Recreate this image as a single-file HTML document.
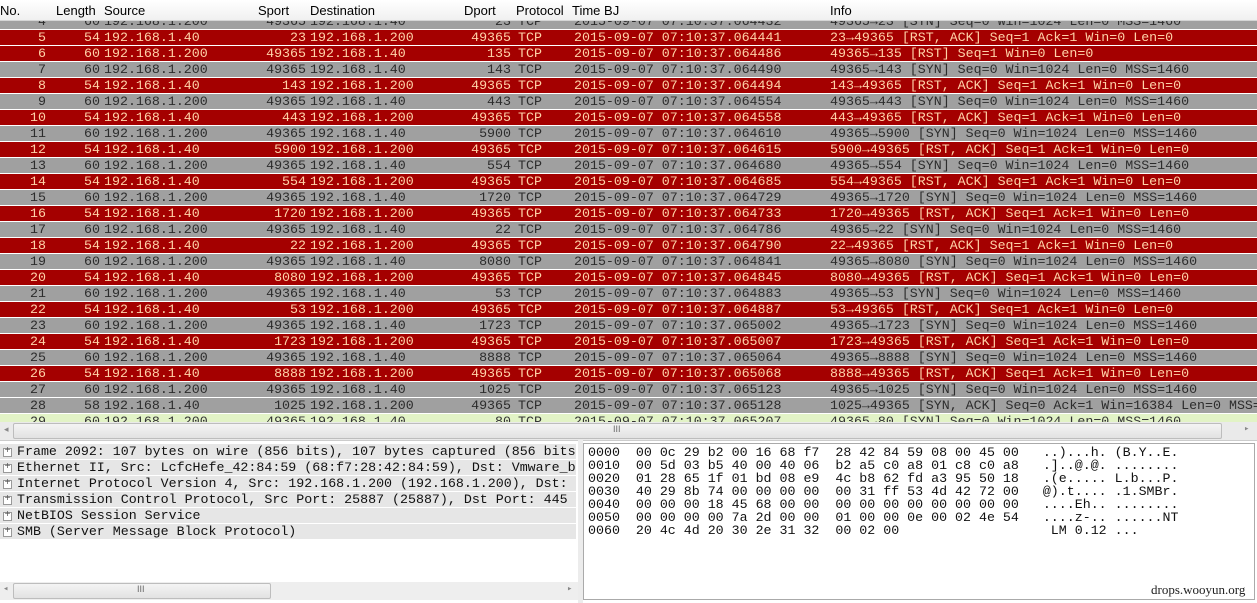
<!DOCTYPE html>
<html><head><meta charset="utf-8"><style>
body{margin:0;width:1257px;height:603px;overflow:hidden;background:#fff;font-family:"Liberation Mono",monospace;font-size:13.3px;position:relative}
.hdr{position:absolute;left:0;top:0;width:1257px;height:20px;background:linear-gradient(#fff,#f0f0f0);border-bottom:1px solid #d5d5d5;font-family:"Liberation Sans",sans-serif;font-size:13px;color:#000;z-index:2}
.hdr span{position:absolute;top:3px}
.r{position:absolute;left:0;width:1257px;height:15px;border-bottom:1px solid #fff;white-space:pre;line-height:15px;overflow:hidden}
.r span{position:absolute;top:0}
.red{background:#a40000;color:#ffd2a8}
.gr{background:#a0a0a0;color:#2c2c2c}
.gn{background:#e2f3c6;color:#333}
.a{right:1211px}.b{right:1157px}.c{left:104px}.d{right:951px}.e{left:310px}.f{right:746px}.g{left:518px}.h{left:574px}.i{left:830px}
.sb{position:absolute;background:linear-gradient(#f4f4f4,#e2e2e2);border:1px solid #bdbdbd;border-radius:2px}
.tree{position:absolute;left:0;top:444px;width:576px}
.t{height:15px;margin-bottom:1px;background:#e6e6e6;line-height:15px;white-space:pre;color:#111;overflow:hidden;padding-left:17px;position:relative}
.t:before{content:"";position:absolute;left:3px;top:4px;width:7px;height:7px;border:1px solid #999;background:#fff}
.t:after{content:"+";position:absolute;left:3px;top:0;width:9px;text-align:center;font-size:10px;color:#555}
.hex{position:absolute;left:583px;top:443px;width:672px;height:157px;border:1px solid #aaa;white-space:pre;line-height:13px;color:#111;padding:2px 0 0 4px;box-sizing:border-box}
</style></head><body>
<div class="hdr"><span style="left:0">No.</span><span style="left:56px">Length</span><span style="left:104px">Source</span><span style="left:258px">Sport</span><span style="left:310px">Destination</span><span style="left:464px">Dport</span><span style="left:516px">Protocol</span><span style="left:572px">Time BJ</span><span style="left:830px">Info</span></div>
<div class="r gr" style="top:14px"><span class="a">4</span><span class="b">60</span><span class="c">192.168.1.200</span><span class="d">49365</span><span class="e">192.168.1.40</span><span class="f">23</span><span class="g">TCP</span><span class="h">2015-09-07 07:10:37.064432</span><span class="i">49365→23 [SYN] Seq=0 Win=1024 Len=0 MSS=1460</span></div>
<div class="r red" style="top:30px"><span class="a">5</span><span class="b">54</span><span class="c">192.168.1.40</span><span class="d">23</span><span class="e">192.168.1.200</span><span class="f">49365</span><span class="g">TCP</span><span class="h">2015-09-07 07:10:37.064441</span><span class="i">23→49365 [RST, ACK] Seq=1 Ack=1 Win=0 Len=0</span></div>
<div class="r red" style="top:46px"><span class="a">6</span><span class="b">60</span><span class="c">192.168.1.200</span><span class="d">49365</span><span class="e">192.168.1.40</span><span class="f">135</span><span class="g">TCP</span><span class="h">2015-09-07 07:10:37.064486</span><span class="i">49365→135 [RST] Seq=1 Win=0 Len=0</span></div>
<div class="r gr" style="top:62px"><span class="a">7</span><span class="b">60</span><span class="c">192.168.1.200</span><span class="d">49365</span><span class="e">192.168.1.40</span><span class="f">143</span><span class="g">TCP</span><span class="h">2015-09-07 07:10:37.064490</span><span class="i">49365→143 [SYN] Seq=0 Win=1024 Len=0 MSS=1460</span></div>
<div class="r red" style="top:78px"><span class="a">8</span><span class="b">54</span><span class="c">192.168.1.40</span><span class="d">143</span><span class="e">192.168.1.200</span><span class="f">49365</span><span class="g">TCP</span><span class="h">2015-09-07 07:10:37.064494</span><span class="i">143→49365 [RST, ACK] Seq=1 Ack=1 Win=0 Len=0</span></div>
<div class="r gr" style="top:94px"><span class="a">9</span><span class="b">60</span><span class="c">192.168.1.200</span><span class="d">49365</span><span class="e">192.168.1.40</span><span class="f">443</span><span class="g">TCP</span><span class="h">2015-09-07 07:10:37.064554</span><span class="i">49365→443 [SYN] Seq=0 Win=1024 Len=0 MSS=1460</span></div>
<div class="r red" style="top:110px"><span class="a">10</span><span class="b">54</span><span class="c">192.168.1.40</span><span class="d">443</span><span class="e">192.168.1.200</span><span class="f">49365</span><span class="g">TCP</span><span class="h">2015-09-07 07:10:37.064558</span><span class="i">443→49365 [RST, ACK] Seq=1 Ack=1 Win=0 Len=0</span></div>
<div class="r gr" style="top:126px"><span class="a">11</span><span class="b">60</span><span class="c">192.168.1.200</span><span class="d">49365</span><span class="e">192.168.1.40</span><span class="f">5900</span><span class="g">TCP</span><span class="h">2015-09-07 07:10:37.064610</span><span class="i">49365→5900 [SYN] Seq=0 Win=1024 Len=0 MSS=1460</span></div>
<div class="r red" style="top:142px"><span class="a">12</span><span class="b">54</span><span class="c">192.168.1.40</span><span class="d">5900</span><span class="e">192.168.1.200</span><span class="f">49365</span><span class="g">TCP</span><span class="h">2015-09-07 07:10:37.064615</span><span class="i">5900→49365 [RST, ACK] Seq=1 Ack=1 Win=0 Len=0</span></div>
<div class="r gr" style="top:158px"><span class="a">13</span><span class="b">60</span><span class="c">192.168.1.200</span><span class="d">49365</span><span class="e">192.168.1.40</span><span class="f">554</span><span class="g">TCP</span><span class="h">2015-09-07 07:10:37.064680</span><span class="i">49365→554 [SYN] Seq=0 Win=1024 Len=0 MSS=1460</span></div>
<div class="r red" style="top:174px"><span class="a">14</span><span class="b">54</span><span class="c">192.168.1.40</span><span class="d">554</span><span class="e">192.168.1.200</span><span class="f">49365</span><span class="g">TCP</span><span class="h">2015-09-07 07:10:37.064685</span><span class="i">554→49365 [RST, ACK] Seq=1 Ack=1 Win=0 Len=0</span></div>
<div class="r gr" style="top:190px"><span class="a">15</span><span class="b">60</span><span class="c">192.168.1.200</span><span class="d">49365</span><span class="e">192.168.1.40</span><span class="f">1720</span><span class="g">TCP</span><span class="h">2015-09-07 07:10:37.064729</span><span class="i">49365→1720 [SYN] Seq=0 Win=1024 Len=0 MSS=1460</span></div>
<div class="r red" style="top:206px"><span class="a">16</span><span class="b">54</span><span class="c">192.168.1.40</span><span class="d">1720</span><span class="e">192.168.1.200</span><span class="f">49365</span><span class="g">TCP</span><span class="h">2015-09-07 07:10:37.064733</span><span class="i">1720→49365 [RST, ACK] Seq=1 Ack=1 Win=0 Len=0</span></div>
<div class="r gr" style="top:222px"><span class="a">17</span><span class="b">60</span><span class="c">192.168.1.200</span><span class="d">49365</span><span class="e">192.168.1.40</span><span class="f">22</span><span class="g">TCP</span><span class="h">2015-09-07 07:10:37.064786</span><span class="i">49365→22 [SYN] Seq=0 Win=1024 Len=0 MSS=1460</span></div>
<div class="r red" style="top:238px"><span class="a">18</span><span class="b">54</span><span class="c">192.168.1.40</span><span class="d">22</span><span class="e">192.168.1.200</span><span class="f">49365</span><span class="g">TCP</span><span class="h">2015-09-07 07:10:37.064790</span><span class="i">22→49365 [RST, ACK] Seq=1 Ack=1 Win=0 Len=0</span></div>
<div class="r gr" style="top:254px"><span class="a">19</span><span class="b">60</span><span class="c">192.168.1.200</span><span class="d">49365</span><span class="e">192.168.1.40</span><span class="f">8080</span><span class="g">TCP</span><span class="h">2015-09-07 07:10:37.064841</span><span class="i">49365→8080 [SYN] Seq=0 Win=1024 Len=0 MSS=1460</span></div>
<div class="r red" style="top:270px"><span class="a">20</span><span class="b">54</span><span class="c">192.168.1.40</span><span class="d">8080</span><span class="e">192.168.1.200</span><span class="f">49365</span><span class="g">TCP</span><span class="h">2015-09-07 07:10:37.064845</span><span class="i">8080→49365 [RST, ACK] Seq=1 Ack=1 Win=0 Len=0</span></div>
<div class="r gr" style="top:286px"><span class="a">21</span><span class="b">60</span><span class="c">192.168.1.200</span><span class="d">49365</span><span class="e">192.168.1.40</span><span class="f">53</span><span class="g">TCP</span><span class="h">2015-09-07 07:10:37.064883</span><span class="i">49365→53 [SYN] Seq=0 Win=1024 Len=0 MSS=1460</span></div>
<div class="r red" style="top:302px"><span class="a">22</span><span class="b">54</span><span class="c">192.168.1.40</span><span class="d">53</span><span class="e">192.168.1.200</span><span class="f">49365</span><span class="g">TCP</span><span class="h">2015-09-07 07:10:37.064887</span><span class="i">53→49365 [RST, ACK] Seq=1 Ack=1 Win=0 Len=0</span></div>
<div class="r gr" style="top:318px"><span class="a">23</span><span class="b">60</span><span class="c">192.168.1.200</span><span class="d">49365</span><span class="e">192.168.1.40</span><span class="f">1723</span><span class="g">TCP</span><span class="h">2015-09-07 07:10:37.065002</span><span class="i">49365→1723 [SYN] Seq=0 Win=1024 Len=0 MSS=1460</span></div>
<div class="r red" style="top:334px"><span class="a">24</span><span class="b">54</span><span class="c">192.168.1.40</span><span class="d">1723</span><span class="e">192.168.1.200</span><span class="f">49365</span><span class="g">TCP</span><span class="h">2015-09-07 07:10:37.065007</span><span class="i">1723→49365 [RST, ACK] Seq=1 Ack=1 Win=0 Len=0</span></div>
<div class="r gr" style="top:350px"><span class="a">25</span><span class="b">60</span><span class="c">192.168.1.200</span><span class="d">49365</span><span class="e">192.168.1.40</span><span class="f">8888</span><span class="g">TCP</span><span class="h">2015-09-07 07:10:37.065064</span><span class="i">49365→8888 [SYN] Seq=0 Win=1024 Len=0 MSS=1460</span></div>
<div class="r red" style="top:366px"><span class="a">26</span><span class="b">54</span><span class="c">192.168.1.40</span><span class="d">8888</span><span class="e">192.168.1.200</span><span class="f">49365</span><span class="g">TCP</span><span class="h">2015-09-07 07:10:37.065068</span><span class="i">8888→49365 [RST, ACK] Seq=1 Ack=1 Win=0 Len=0</span></div>
<div class="r gr" style="top:382px"><span class="a">27</span><span class="b">60</span><span class="c">192.168.1.200</span><span class="d">49365</span><span class="e">192.168.1.40</span><span class="f">1025</span><span class="g">TCP</span><span class="h">2015-09-07 07:10:37.065123</span><span class="i">49365→1025 [SYN] Seq=0 Win=1024 Len=0 MSS=1460</span></div>
<div class="r gr" style="top:398px"><span class="a">28</span><span class="b">58</span><span class="c">192.168.1.40</span><span class="d">1025</span><span class="e">192.168.1.200</span><span class="f">49365</span><span class="g">TCP</span><span class="h">2015-09-07 07:10:37.065128</span><span class="i">1025→49365 [SYN, ACK] Seq=0 Ack=1 Win=16384 Len=0 MSS=1460</span></div>
<div class="r gn" style="top:414px;height:8px;border:0"><span class="a">29</span><span class="b">60</span><span class="c">192.168.1.200</span><span class="d">49365</span><span class="e">192.168.1.40</span><span class="f">80</span><span class="g">TCP</span><span class="h">2015-09-07 07:10:37.065207</span><span class="i">49365→80 [SYN] Seq=0 Win=1024 Len=0 MSS=1460</span></div>
<div style="position:absolute;left:0;top:422px;width:1257px;height:18px;background:#eaeaea;border-bottom:1px solid #ccc"></div>
<div style="position:absolute;left:4px;top:424px;font-size:9px;color:#888;font-family:'Liberation Sans',sans-serif">◂</div>
<div class="sb" style="left:13px;top:423px;width:1207px;height:14px"></div>
<div style="position:absolute;left:613px;top:424px;font-size:9px;color:#666;font-family:'Liberation Sans',sans-serif">III</div>
<div style="position:absolute;left:1244px;top:424px;font-size:9px;color:#888">▸</div>
<div class="tree">
<div class="t">Frame 2092: 107 bytes on wire (856 bits), 107 bytes captured (856 bits</div>
<div class="t">Ethernet II, Src: LcfcHefe_42:84:59 (68:f7:28:42:84:59), Dst: Vmware_b</div>
<div class="t">Internet Protocol Version 4, Src: 192.168.1.200 (192.168.1.200), Dst: </div>
<div class="t">Transmission Control Protocol, Src Port: 25887 (25887), Dst Port: 445</div>
<div class="t">NetBIOS Session Service</div>
<div class="t">SMB (Server Message Block Protocol)</div>
</div>
<div style="position:absolute;left:0;top:582px;width:578px;height:18px;background:#eee"></div>
<div class="sb" style="left:13px;top:583px;width:256px;height:14px"></div>
<div style="position:absolute;left:137px;top:584px;font-size:9px;color:#666;font-family:'Liberation Sans',sans-serif">III</div>
<div style="position:absolute;left:3px;top:584px;font-size:9px;color:#888">◂</div>
<div style="position:absolute;left:567px;top:584px;font-size:9px;color:#888">▸</div>
<div style="position:absolute;left:578px;top:440px;width:5px;height:163px;background:#ececec"></div>
<div class="hex">0000  00 0c 29 b2 00 16 68 f7  28 42 84 59 08 00 45 00   ..)...h. (B.Y..E.
0010  00 5d 03 b5 40 00 40 06  b2 a5 c0 a8 01 c8 c0 a8   .]..@.@. ........
0020  01 28 65 1f 01 bd 08 e9  4c b8 62 fd a3 95 50 18   .(e..... L.b...P.
0030  40 29 8b 74 00 00 00 00  00 31 ff 53 4d 42 72 00   @).t.... .1.SMBr.
0040  00 00 00 18 45 68 00 00  00 00 00 00 00 00 00 00   ....Eh.. ........
0050  00 00 00 00 7a 2d 00 00  01 00 00 0e 00 02 4e 54   ....z-.. ......NT
0060  20 4c 4d 20 30 2e 31 32  00 02 00                   LM 0.12 ...</div>
<div style="position:absolute;left:1151px;top:582px;font-family:'Liberation Serif',serif;font-size:13px;color:#222">drops.wooyun.org</div>
</body></html>
